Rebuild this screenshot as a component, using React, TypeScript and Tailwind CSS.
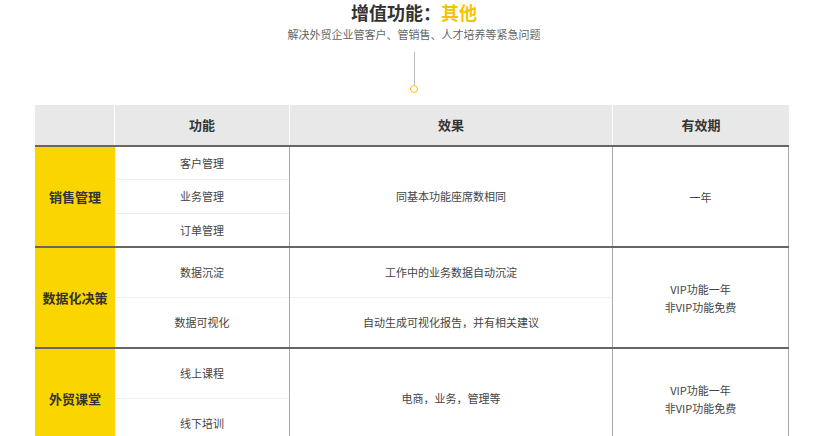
export default function App() {
  const font = { fontFamily: '"Noto Sans CJK SC", "Liberation Sans", sans-serif' };
  const groups = [
    { name: "销售管理", h: 101, items: ["客户管理", "业务管理", "订单管理"], effects: ["同基本功能座席数相同"], valid: ["一年"] },
    { name: "数据化决策", h: 101, items: ["数据沉淀", "数据可视化"], effects: ["工作中的业务数据自动沉淀", "自动生成可视化报告，并有相关建议"], valid: ["VIP功能一年", "非VIP功能免费"] },
    { name: "外贸课堂", h: 101, items: ["线上课程", "线下培训"], effects: ["电商，业务，管理等"], valid: ["VIP功能一年", "非VIP功能免费"] },
  ];
  return (
    <div className="w-[828px] h-[436px] overflow-hidden bg-white text-[#333]" style={font}>
      <div className="flex flex-col items-center">
        <div className="text-[18px] font-bold leading-[24px] h-[24px] text-[#333]">增值功能：<span className="text-[#f5c400]">其他</span></div>
        <div className="mt-[3px] text-[11px] leading-[14px] text-[#666]">解决外贸企业管客户、管销售、人才培养等紧急问题</div>
        <div className="mt-[11px] w-px h-[33px] bg-[#bbb]" />
        <div className="w-[8px] h-[8px] rounded-full border border-[#f5c400]" />
      </div>
      <div className="ml-[35px] mt-[12px] w-[754px]">
        <div className="flex h-[40px] bg-[#e8e8e8] text-[13px] font-bold text-[#333]">
          <div className="w-[80px] border-r border-white" />
          <div className="w-[175px] border-r border-white flex items-center justify-center">功能</div>
          <div className="w-[323px] border-r border-white flex items-center justify-center">效果</div>
          <div className="w-[176px] flex items-center justify-center">有效期</div>
        </div>
        {groups.map((g, gi) => (
          <div key={gi} className="flex border-t-2 border-[#666] text-[11px] text-[#444]" style={{ height: g.h }}>
            <div className="w-[80px] bg-[#fbd500] flex items-center justify-center text-[13px] font-bold text-[#333]">{g.name}</div>
            <div className="w-[175px] border-r border-[#aaa] flex flex-col">
              {g.items.map((it, i) => (
                <div key={i} className={`flex-1 flex items-center justify-center ${i > 0 ? "border-t border-[#eee]" : ""}`}>{it}</div>
              ))}
            </div>
            <div className="w-[323px] border-r border-[#aaa] flex flex-col">
              {g.effects.map((it, i) => (
                <div key={i} className={`flex-1 flex items-center justify-center ${i > 0 ? "border-t border-[#eee]" : ""}`}>{it}</div>
              ))}
            </div>
            <div className="w-[176px] border-r border-[#aaa] flex flex-col items-center justify-center leading-[18px]">
              {g.valid.map((v, i) => <div key={i}>{v}</div>)}
            </div>
          </div>
        ))}
      </div>
    </div>
  );
}
